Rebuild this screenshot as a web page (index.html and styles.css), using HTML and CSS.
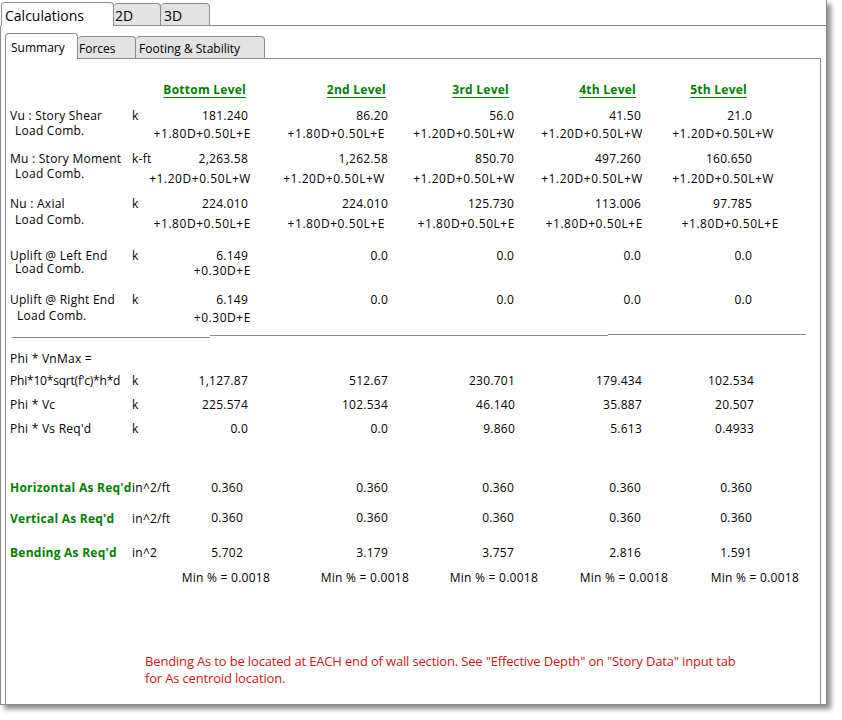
FILE: index.html
```html
<!DOCTYPE html>
<html>
<head>
<meta charset="utf-8">
<link rel="stylesheet" href="styles.css">
</head>
<body>
<div class="window">
  <div class="strip top">
    <div class="tab active t-calc">Calculations</div>
    <div class="tab t-2d">2D</div>
    <div class="tab t-3d">3D</div>
    <div class="fill"></div>
  </div>
  <div class="page">
    <div class="strip inner">
      <div class="tab active t-sum">Summary</div>
      <div class="tab t-forces">Forces</div>
      <div class="tab t-foot">Footing &amp; Stability</div>
      <div class="fill"></div>
    </div>
    <div class="panel">
      <div class="row hdr">
        <span></span><span></span>
        <span class="h">Bottom Level</span><span class="h">2nd Level</span><span class="h">3rd Level</span><span class="h">4th Level</span><span class="h">5th Level</span>
      </div>

      <div class="row main r-vu">
        <span>Vu : Story Shear</span><span>k</span>
        <span>181.240</span><span>86.20</span><span>56.0</span><span>41.50</span><span>21.0</span>
      </div>
      <div class="row lc p3">
        <span class="lcl">Load Comb.</span><span></span>
        <span>+1.80D+0.50L+E</span><span>+1.80D+0.50L+E</span><span>+1.20D+0.50L+W</span><span>+1.20D+0.50L+W</span><span>+1.20D+0.50L+W</span>
      </div>

      <div class="row main r-mu">
        <span>Mu : Story Moment</span><span>k-ft</span>
        <span>2,263.58</span><span>1,262.58</span><span>850.70</span><span>497.260</span><span>160.650</span>
      </div>
      <div class="row lc p5">
        <span class="lcl">Load Comb.</span><span></span>
        <span>+1.20D+0.50L+W</span><span>+1.20D+0.50L+W</span><span>+1.20D+0.50L+W</span><span>+1.20D+0.50L+W</span><span>+1.20D+0.50L+W</span>
      </div>

      <div class="row main r-nu">
        <span>Nu : Axial</span><span>k</span>
        <span>224.010</span><span>224.010</span><span>125.730</span><span>113.006</span><span>97.785</span>
      </div>
      <div class="row lc p4 r-nulc">
        <span class="lcl">Load Comb.</span><span></span>
        <span>+1.80D+0.50L+E</span><span>+1.80D+0.50L+E</span><span>+1.80D+0.50L+E</span><span>+1.80D+0.50L+E</span><span class="far">+1.80D+0.50L+E</span>
      </div>

      <div class="row main r-upl">
        <span>Uplift @ Left End</span><span>k</span>
        <span>6.149</span><span>0.0</span><span>0.0</span><span>0.0</span><span>0.0</span>
      </div>
      <div class="row lc p2 r-upllc">
        <span class="lcl">Load Comb.</span><span></span>
        <span>+0.30D+E</span><span></span><span></span><span></span><span></span>
      </div>

      <div class="row main r-upr">
        <span>Uplift @ Right End</span><span>k</span>
        <span>6.149</span><span>0.0</span><span>0.0</span><span>0.0</span><span>0.0</span>
      </div>
      <div class="row lc p2 r-uprlc">
        <span class="lcl lcl-r">Load Comb.</span><span></span>
        <span>+0.30D+E</span><span></span><span></span><span></span><span></span>
      </div>

      <div class="sep">
        <div class="seg seg1"></div>
        <div class="seg seg2"></div>
        <div class="seg seg3"></div>
      </div>

      <div class="row main r-vnmax">
        <span class="wide">Phi * VnMax =</span>
      </div>
      <div class="row main phi r-phi10">
        <span class="tight">Phi*10*sqrt(f'c)*h*d</span><span>k</span>
        <span>1,127.87</span><span>512.67</span><span>230.701</span><span>179.434</span><span>102.534</span>
      </div>
      <div class="row main phi r-vc">
        <span>Phi * Vc</span><span>k</span>
        <span>225.574</span><span>102.534</span><span>46.140</span><span>35.887</span><span>20.507</span>
      </div>
      <div class="row main phi r-vs">
        <span>Phi * Vs Req'd</span><span>k</span>
        <span>0.0</span><span>0.0</span><span>9.860</span><span>5.613</span><span>0.4933</span>
      </div>

      <div class="row main as r-hor">
        <span class="g">Horizontal As Req'd</span><span>in^2/ft</span>
        <span>0.360</span><span>0.360</span><span>0.360</span><span>0.360</span><span>0.360</span>
      </div>
      <div class="row main as r-ver">
        <span class="g glow">Vertical As Req'd</span><span class="glow">in^2/ft</span>
        <span>0.360</span><span>0.360</span><span>0.360</span><span>0.360</span><span>0.360</span>
      </div>
      <div class="row main as r-ben">
        <span class="g">Bending As Req'd</span><span>in^2</span>
        <span>5.702</span><span>3.179</span><span>3.757</span><span>2.816</span><span>1.591</span>
      </div>
      <div class="row main minp r-min">
        <span></span><span></span>
        <span>Min % = 0.0018</span><span>Min % = 0.0018</span><span>Min % = 0.0018</span><span>Min % = 0.0018</span><span>Min % = 0.0018</span>
      </div>

      <p class="note">Bending As to be located at EACH end of wall section. See "Effective Depth" on "Story Data" input tab<br>for As centroid location.</p>
    </div>
  </div>
</div>
</body>
</html>
```

FILE: styles.css
```css
* { box-sizing: border-box; }
html, body { margin: 0; padding: 0; background: #fff; }
body {
  font-family: "Open Sans", "Segoe UI", sans-serif;
  font-size: 12px;
  color: #000;
  width: 842px;
  height: 720px;
  overflow: hidden;
}

.window {
  width: 827px;
  height: 705px;
  display: flex;
  flex-direction: column;
  background: #fff;
  box-shadow: 4px 4px 5px rgba(0, 0, 0, 0.45);
}

/* tab strips */
.strip { display: flex; align-items: flex-end; flex: none; }
.strip.top { height: 26px; }
.strip.inner { height: 26px; }

.tab {
  border: 1px solid #8c8c8c;
  border-left: none;
  border-radius: 4px 4px 0 0;
  background: #e3e3e3;
  white-space: nowrap;
  overflow: hidden;
}
.tab.active {
  border-left: 1px solid #8c8c8c;
  border-bottom: none;
  background: #fff;
}
.fill { flex: 1; border-bottom: 1px solid #8c8c8c; }
.strip.top .fill { align-self: stretch; border-right: 1px solid #8c8c8c; }

.strip.top .tab { font-size: 14px; }
.t-calc { margin-left: 1px; width: 113px; height: 24px; padding: 3px 0 0 3px; line-height: 20px; }
.t-2d { width: 47px; height: 23px; padding: 3px 0 0 1px; line-height: 18px; }
.t-3d { width: 49px; height: 23px; padding: 3px 0 0 3px; line-height: 18px; }

.t-sum { width: 73px; height: 26px; padding: 6px 0 0 5px; line-height: 16px; }
.t-forces { width: 58px; height: 23px; padding: 4px 0 0 1px; line-height: 16px; }
.t-foot { width: 129px; height: 23px; padding: 4px 0 0 3px; line-height: 16px; }

/* page & panel */
.page {
  flex: 1;
  display: flex;
  flex-direction: column;
  border: 1px solid #8c8c8c;
  border-top: none;
  padding: 7px 5px 0 4px;
}
.panel {
  flex: 1;
  border-left: 1px solid #8c8c8c;
  border-right: 1px solid #8c8c8c;
  padding-left: 4px;
}

/* data rows */
.row {
  display: grid;
  grid-template-columns: 122px 36px 80px 140px 126px 127px 111px;
  white-space: nowrap;
  letter-spacing: 0.25px;
}
.row > span:nth-child(n+3) { justify-self: end; text-align: right; }
.row.main { line-height: 14px; padding: 1px 0; }
.row .wide { grid-column: 1 / 4; }
.tight { letter-spacing: -0.2px; }

.hdr { line-height: 16px; margin-top: 23px; }
.h {
  color: #008000;
  font-weight: bold;
  text-decoration: underline;
  text-underline-offset: 3px;
}
.hdr > :nth-child(3) { margin-right: 2px; }
.hdr > :nth-child(4) { margin-right: 2px; }
.hdr > :nth-child(5) { margin-right: 5px; }
.hdr > :nth-child(6) { margin-right: 5px; }
.hdr > :nth-child(7) { margin-right: 5px; }

.row.lc { line-height: 14px; }
.lc > span:nth-child(n+3) { letter-spacing: 0.55px; }
.lcl { padding-left: 5px; padding-top: 1px; line-height: 12px; }
.lcl-r { padding-left: 7px; }
.lc.p2 > :nth-child(n+3) { padding-top: 2px; }
.lc.p3 > :nth-child(n+3) { padding-top: 3px; }
.lc.p4 > :nth-child(n+3) { padding-top: 4px; }
.lc.p5 > :nth-child(n+3) { padding-top: 5px; }
.lc > :nth-child(3) { margin-right: -3px; }
.lc > :nth-child(4) { margin-right: 3px; }
.lc > :nth-child(5) { margin-right: -1px; }
.lc > :nth-child(6) { margin-right: -2px; }
.lc > :nth-child(7) { margin-right: -22px; }
.lc > .far { margin-right: -27px; }

.phi > :nth-child(5), .phi > :nth-child(6) { margin-right: -1px; }
.phi > :nth-child(7) { margin-right: -2px; }

.as > :nth-child(3) { margin-right: 5px; }
.g { color: #008000; font-weight: bold; }
.r-ver .glow { padding-top: 1px; }

.minp > :nth-child(3) { margin-right: -22px; }
.minp > :nth-child(4) { margin-right: -21px; }
.minp > :nth-child(5) { margin-right: -24px; }
.minp > :nth-child(6) { margin-right: -27px; }
.minp > :nth-child(7) { margin-right: -47px; }

/* vertical rhythm */
.r-vu { margin-top: 10px; }
.r-mu { margin-top: 10px; }
.r-nu { margin-top: 10px; }
.r-nulc { margin-top: 1px; }
.r-upl { margin-top: 17px; }
.r-upllc { margin-top: -2px; }
.r-upr { margin-top: 14px; }
.r-uprlc { margin-top: 1px; }

.sep { display: flex; align-items: flex-start; height: 4px; margin-top: 9px; margin-left: 2px; }
.seg { height: 1px; background: #8c8c8c; }
.seg1 { width: 198px; margin-top: 3px; }
.seg2 { width: 398px; margin-top: 1px; }
.seg3 { width: 198px; margin-top: 0; }

.r-vnmax { margin-top: 13px; }
.r-phi10 { margin-top: 6px; }
.r-vc { margin-top: 8px; }
.r-vs { margin-top: 8px; }
.r-hor { margin-top: 43px; }
.r-ver { margin-top: 14px; }
.r-ben { margin-top: 18px; }
.r-min { margin-top: 9px; }

.note {
  margin: 67px 0 0 0;
  padding-left: 135px;
  color: #d01515;
  font-size: 13px;
  line-height: 17px;
  letter-spacing: -0.16px;
  white-space: nowrap;
}
```
